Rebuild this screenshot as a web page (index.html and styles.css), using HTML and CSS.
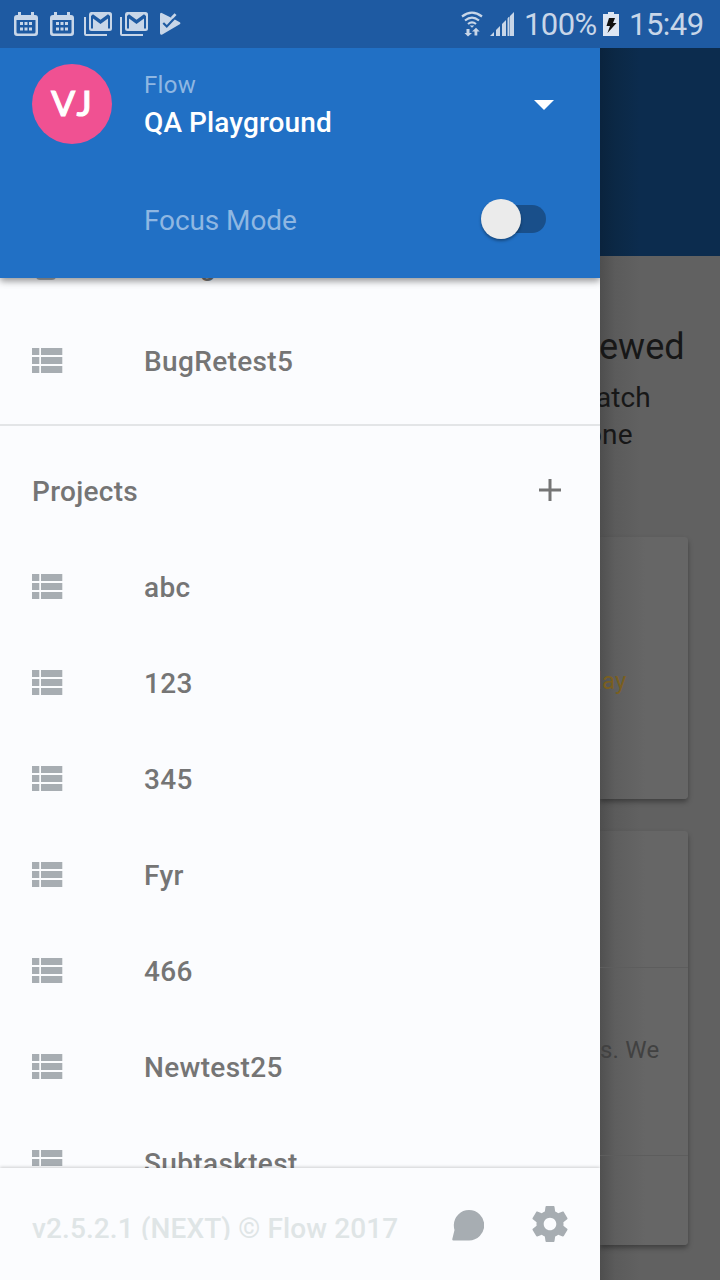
FILE: index.html
```html
<!DOCTYPE html>
<html lang="en">
<head>
<meta charset="utf-8">
<title>Flow</title>
<link rel="stylesheet" href="styles.css">
</head>
<body>
<svg class="defs" width="0" height="0">
  <symbol id="list" viewBox="0 0 32 32"><path d="M0 4h7.3v7H0zM9 4h21.3v7H9zM0 13h7.3v7H0zM9 13h21.3v7H9zM0 22h7.3v7H0zM9 22h21.3v7H9z"/></symbol>
  <symbol id="calendar" viewBox="0 0 24 24"><path fill-rule="evenodd" d="M4 0h3v3h10V0h3v3h1q3 0 3 3v15q0 3-3 3H3q-3 0-3-3V6q0-3 3-3h1zM2.500 8v12q0 1.500 1.500 1.500h16q1.500 0 1.500-1.500V8z"/><path d="M6 10h3v3H6zM10.500 10h3v3h-3zM15 10h3v3h-3zM6 15.500h3v3H6zM10.500 15.500h3v3h-3zM15 15.500h3v3h-3z"/></symbol>
  <symbol id="mail" viewBox="0 0 28 24"><path d="M0 5h2v17h21v2H2q-2 0-2-2z"/><path fill-rule="evenodd" d="M7 0h18.500Q28 0 28 2.500v14q0 2.500-2.500 2.500h-18Q5 19 5 16.500V2.500Q5 0 7 0zM7 4v12.500h2V6.500l7.500 5.500L24 6.500v10h2V4l-2-1.800-7.500 5.600L9 2.200z"/></symbol>
</svg>

<header class="status">
  <div class="status-left">
    <svg class="cal"><use href="#calendar"/></svg>
    <svg class="cal cal-last"><use href="#calendar"/></svg>
    <svg class="mail"><use href="#mail"/></svg>
    <svg class="mail"><use href="#mail"/></svg>
    <svg class="play" viewBox="0 0 21 24"><path d="M0 2.500Q0 0 2.300 1.200l10.500 5.200L6.800 13 4 10.300 2.500 11.800l4.300 4.200 8-8.600 4.500 2.600q2.200 1.200 0 2.500L2.300 22.500Q0 23.500 0 21z"/><path d="M14.500 1.200l2 1.900-3.800 4-2-1.900z"/></svg>
  </div>
  <div class="status-right">
    <svg class="wifi" viewBox="0 0 22 26"><g fill="none" stroke="currentColor" stroke-width="2.200"><path d="M1 5.500q10-7.600 20 0M4 9.500q7-5.600 14 0M7 13q4-3.200 8 0"/></g><path d="M8.700 14.500h4.600L11 16.800zM5.500 18h3v4H11l-4 3.500L3.500 22h2zM13.500 24.500v-4H11l4-3.800 3.700 3.800h-2.400v4z"/></svg>
    <svg class="signal" viewBox="0 0 24 24"><path d="M0 24l4-4v4zM6 18l4-4v10H6zM12 12l4-4v16h-4zM18 6l1-1v19h-1z"/><path d="M17.500 6.500l2-2V24h-2zM20 4l4-4v24h-4z"/></svg>
    <span class="percent">100%</span>
    <svg class="battery" viewBox="0 0 16 24"><path class="cell" d="M0 2h5V0h6v2h5v22H0z"/><path class="bolt" d="M6 6h6l-2 5h3.500L4.500 21l2.500-7H3.500z"/></svg>
    <span class="clock">15:49</span>
  </div>
</header>

<div class="screen">
  <aside class="drawer">
    <section class="account">
      <div class="profile">
        <div class="avatar">VJ</div>
        <div class="names"><span class="org">Flow</span><strong class="workspace">QA Playground</strong></div>
        <svg class="caret" viewBox="0 0 20 10"><path d="M0 0h20L10 10z"/></svg>
      </div>
      <div class="focus"><span>Focus Mode</span><span class="toggle"><span class="knob"></span></span></div>
    </section>

    <nav class="list">
      <div class="row partial"><svg class="icon" viewBox="0 0 32 32"><rect x="4" y="4" width="20" height="28" rx="4"/></svg><span class="tail">g</span></div>
      <div class="row"><svg class="icon"><use href="#list"/></svg><span>BugRetest5</span></div>
      <div class="group">
        <div class="group-head"><span>Projects</span><svg class="plus" viewBox="0 0 22 22"><path d="M9.500 0h3v9.500H22v3h-9.500V22h-3v-9.500H0v-3h9.500z"/></svg></div>
        <div class="row"><svg class="icon"><use href="#list"/></svg><span>abc</span></div>
        <div class="row"><svg class="icon"><use href="#list"/></svg><span>123</span></div>
        <div class="row"><svg class="icon"><use href="#list"/></svg><span>345</span></div>
        <div class="row"><svg class="icon"><use href="#list"/></svg><span>Fyr</span></div>
        <div class="row"><svg class="icon"><use href="#list"/></svg><span>466</span></div>
        <div class="row"><svg class="icon"><use href="#list"/></svg><span>Newtest25</span></div>
        <div class="row"><svg class="icon"><use href="#list"/></svg><span>Subtasktest</span></div>
      </div>
    </nav>

    <footer class="foot">
      <span class="version">v2.5.2.1 (NEXT) © Flow 2017</span>
      <svg class="chat" viewBox="0 0 32 31"><path d="M17 0a15.200 15.200 0 0 1 0 30.500H1.500Q0 30.500.3 29L2.500 20Q1.800 17.500 1.800 15A15.200 15.200 0 0 1 17 0z"/></svg>
      <svg class="gear" viewBox="2 2 20 20"><path d="M19.430 12.980c.04-.32.070-.64.070-.98s-.03-.66-.07-.98l2.110-1.650c.19-.15.240-.42.120-.64l-2-3.460c-.12-.22-.39-.3-.61-.22l-2.490 1c-.52-.4-1.080-.73-1.690-.98l-.38-2.650A.488.488 0 0 0 14 2h-4c-.25 0-.46.180-.49.420l-.38 2.650c-.61.250-1.170.590-1.690.98l-2.490-1c-.23-.09-.49 0-.61.220l-2 3.460c-.13.220-.07.490.120.640l2.110 1.650c-.04.320-.07.650-.07.980s.03.660.07.980l-2.110 1.650c-.19.150-.24.420-.12.640l2 3.460c.12.220.390.300.610.220l2.490-1c.52.400 1.080.730 1.690.980l.38 2.650c.03.240.240.420.490.420h4c.25 0 .46-.18.490-.42l.38-2.650c.61-.25 1.170-.59 1.690-.98l2.490 1c.23.090.49 0 .61-.22l2-3.460c.12-.22.070-.49-.12-.64l-2.110-1.650zM12 15.500c-1.930 0-3.500-1.570-3.500-3.500s1.570-3.500 3.500-3.500 3.500 1.570 3.500 3.500-1.570 3.500-3.500 3.500z"/></svg>
    </footer>
  </aside>

  <main class="behind">
    <div class="toolbar"></div>
    <div class="content">
      <h1 class="title">ewed</h1>
      <p class="sub">atch<br><span class="one">one</span></p>
      <article class="card first"><span class="day">lay</span></article>
      <article class="card second"><div class="head"></div><div class="text">s. We</div></article>
    </div>
  </main>
</div>
</body>
</html>
```

FILE: styles.css
```css
* { box-sizing: border-box; }
body {
  margin: 0;
  width: 720px;
  height: 1280px;
  overflow: hidden;
  font-family: Roboto, "Liberation Sans", sans-serif;
  background: #616161;
}
svg { display: block; flex: none; fill: currentColor; }
.defs { position: absolute; }

.status {
  height: 48px;
  display: flex;
  justify-content: space-between;
  background: #1e5aa2;
  color: #c8d6e8;
}
.status-left { display: flex; padding: 12px 0 0 14px; }
.cal { width: 24px; height: 24px; margin-right: 12px; }
.cal-last { margin-right: 10px; }
.mail { width: 28px; height: 24px; margin-right: 8px; }
.play { width: 21px; height: 24px; margin-left: 4px; }
.status-right { display: flex; padding: 12px 15px 0 0; font-size: 31px; line-height: 26px; }
.wifi { width: 22px; height: 26px; margin: -1px 7px 0 0; }
.signal { width: 24px; height: 24px; margin-right: 10px; }
.percent { width: 79px; letter-spacing: -0.6px; }
.battery { width: 16px; height: 24px; margin-right: 10px; }
.cell { fill: #dde6f3; }
.bolt { fill: #111; }
.clock { width: 76px; letter-spacing: -0.5px; }

.screen { display: flex; height: 1232px; }
.drawer {
  width: 600px;
  flex: none;
  display: flex;
  flex-direction: column;
  overflow: hidden;
  background: #fbfcfe;
  color: #757575;
  font-size: 28px;
  font-weight: 500;
}
.account {
  height: 230px;
  flex: none;
  padding: 16px 32px 0;
  background: #2170c5;
  box-shadow: 0 3px 7px rgba(0, 0, 0, 0.42);
  z-index: 1;
}
.profile { display: flex; height: 80px; }
.avatar {
  width: 80px;
  height: 80px;
  padding-left: 3px;
  border-radius: 50%;
  background: #f05192;
  color: #fff;
  font: 500 35px/76px Lato, sans-serif;
  letter-spacing: 4px;
  text-align: center;
  -webkit-text-stroke: 1.2px #fff;
}
.names { display: flex; flex-direction: column; flex: 1; padding: 1px 0 0 32px; }
.org { color: #8fb7e2; font-size: 24px; font-weight: 400; line-height: 40px; letter-spacing: 0.3px; }
.workspace { color: #fff; font-size: 28px; font-weight: 500; line-height: 36px; letter-spacing: 0.1px; }
.caret { width: 20px; height: 10px; margin: 36px 14px 0 0; color: #fff; }
.focus {
  display: flex;
  align-items: center;
  height: 80px;
  margin-top: 36px;
  padding-left: 112px;
  color: #8fb7e2;
  font-weight: 400;
  letter-spacing: -0.1px;
}
.toggle { width: 64px; height: 28px; margin: -2px 22px 0 auto; border-radius: 14px; background: #194f8a; }
.knob {
  display: block;
  width: 40px;
  height: 40px;
  margin: -6px 0 0 -1px;
  border-radius: 50%;
  background: #ebebeb;
  box-shadow: 0 2px 3px rgba(0, 0, 0, 0.35);
}

.list { flex: 1; min-height: 0; overflow: hidden; }
.row { display: flex; align-items: center; height: 96px; padding: 0 32px; letter-spacing: 0.35px; }
.row span { padding-top: 3px; }
.icon { width: 32px; height: 32px; margin-right: 80px; color: #a7adb2; }
.partial { margin-top: -62px; }
.partial .tail { padding-left: 56px; }
.group { margin-top: 16px; padding-top: 16px; border-top: 2px solid #e3e5e7; }
.group-head { display: flex; align-items: center; justify-content: space-between; height: 96px; padding: 0 39px 0 32px; letter-spacing: 0.3px; }
.group-head span { padding-top: 3px; }
.plus { width: 22px; height: 22px; }

.foot {
  display: flex;
  align-items: center;
  height: 112px;
  flex: none;
  padding: 0 32px;
  background: #fbfcfe;
  box-shadow: 0 -1px 3px rgba(0, 0, 0, 0.18);
  color: #a7adb2;
  z-index: 1;
}
.version { width: 420px; height: 29px; margin-top: 2px; overflow: hidden; color: #dfe5e6; line-height: 36px; letter-spacing: 0.1px; white-space: nowrap; }
.chat { width: 32px; height: 31px; margin-top: 2px; }
.gear { width: 36px; height: 36px; margin-left: 48px; }

.behind { width: 120px; overflow: hidden; background: linear-gradient(90deg, #4e4e4e, #5b5b5b 15px, #616161 40px); color: #171717; }
.toolbar { height: 208px; background: linear-gradient(90deg, #0a233d, #0b2845 15px, #0c2c4e 40px); }
.title { margin: 70px 0 0 -1px; font-size: 36px; font-weight: 400; line-height: 42px; }
.sub { margin: 11px 0 0 -4px; font-size: 28px; line-height: 37px; letter-spacing: 0.1px; }
.one { margin-left: -10px; }
.card { width: 88px; border-radius: 0 4px 4px 0; background: linear-gradient(90deg, #505050, #5e5e5e 15px, #666 45px); box-shadow: 0 3px 5px rgba(0, 0, 0, 0.34); overflow: hidden; }
.first { height: 262px; margin-top: 84px; padding-top: 128px; }
.day { margin-left: -4px; color: #7a5f20; font-size: 24px; line-height: 32px; letter-spacing: 0.2px; }
.second { height: 414px; margin-top: 32px; }
.head { height: 137px; border-bottom: 1px solid #5d5d5d; }
.text { height: 188px; padding-top: 66px; border-bottom: 1px solid #5d5d5d; color: #414141; font-size: 24px; line-height: 32px; letter-spacing: 0.2px; white-space: nowrap; }
```
